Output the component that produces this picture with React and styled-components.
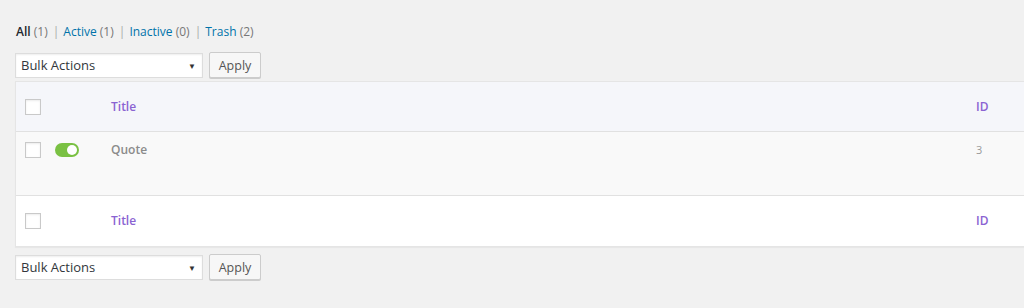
import React from "react"
import styled, { createGlobalStyle } from "styled-components"

const GlobalStyle = createGlobalStyle`
  html, body {
    margin: 0;
    background: #f1f1f1;
    overflow: hidden;
  }
  body {
    font-family: "Open Sans", "Noto Sans", sans-serif;
    color: #444;
  }
`

const Page = styled.div`
  width: 1024px;
  height: 308px;
  padding: 24px 0 0 15px;
  box-sizing: border-box;
  overflow: hidden;
`

const Filters = styled.ul`
  display: flex;
  list-style: none;
  margin: 0 0 0 1px;
  padding: 0;
  font-size: 12px;
  line-height: 16px;
  color: #666;
  white-space: nowrap;
`

const FilterItem = styled.li`
  a {
    color: ${(p) => (p.current ? "#23282d" : "#0073aa")};
    font-weight: ${(p) => (p.current ? 600 : 400)};
    text-decoration: none;
  }
  .count {
    color: #777;
  }
  .sep {
    color: #aaa;
    margin: 0 4px 0 5px;
  }
`

const ActionBar = styled.div`
  display: flex;
  align-items: center;
  gap: 6px;
  margin: ${(p) => p.margin};
`

const Select = styled.div`
  width: 188px;
  height: 25px;
  box-sizing: border-box;
  border: 1px solid #ddd;
  background: #fff;
  box-shadow: inset 0 1px 2px rgba(0, 0, 0, 0.07);
  display: flex;
  align-items: center;
  justify-content: space-between;
  padding: 0 6px 0 5px;
  font-size: 13px;
  color: #32373c;
`

const Caret = styled.span`
  font-size: 8px;
  color: #333;
  margin-right: 0;
`

const Button = styled.button`
  height: 26px;
  width: 52px;
  box-sizing: border-box;
  border: 1px solid #ccc;
  border-radius: 2px;
  background: #f7f7f7;
  box-shadow: 0 1px 0 #ccc;
  font-family: inherit;
  font-size: 12.5px;
  color: #555;
  padding: 0;
`

const Table = styled.div`
  width: 1012px;
  border: 1px solid #e5e5e5;
  box-shadow: 0 1px 1px rgba(0, 0, 0, 0.04);
  background: #fff;
`

const Row = styled.div`
  display: flex;
  align-items: ${(p) => (p.top ? "flex-start" : "center")};
  height: ${(p) => p.h}px;
  box-sizing: border-box;
  padding-top: ${(p) => (p.top ? 10 : 0)}px;
  background: ${(p) => p.bg};
  border-bottom: ${(p) => (p.line ? "1px solid #e1e1e1" : "none")};
`

const CheckCell = styled.div`
  width: 39px;
  padding-left: 9px;
  box-sizing: border-box;
  display: flex;
`

const Checkbox = styled.span`
  width: 16px;
  height: 16px;
  box-sizing: border-box;
  border: 1px solid #c9c9c9;
  background: #fff;
  box-shadow: inset 0 1px 2px rgba(0, 0, 0, 0.08);
`

const ToggleCell = styled.div`
  width: 56px;
  display: flex;
  padding-top: ${(p) => (p.top ? 1 : 0)}px;
`

const Toggle = styled.span`
  width: 24px;
  height: 14px;
  border-radius: 7px;
  background: #7ac143;
  display: flex;
  align-items: center;
  justify-content: flex-end;
  padding: 0 2px;
  box-sizing: border-box;

  &::after {
    content: "";
    width: 10px;
    height: 10px;
    border-radius: 50%;
    background: #fff;
  }
`

const TitleCell = styled.div`
  flex: 1;
  font-size: 12px;
  font-weight: 600;
  color: ${(p) => p.color};
  line-height: 16px;
`

const IdCell = styled.div`
  width: 52px;
  font-size: ${(p) => (p.head ? 12 : 11)}px;
  font-weight: ${(p) => (p.head ? 600 : 400)};
  color: ${(p) => (p.head ? "#8a63d2" : "#999")};
  line-height: 16px;
`

const filters = [
  { label: "All", count: 1, current: true },
  { label: "Active", count: 1 },
  { label: "Inactive", count: 0 },
  { label: "Trash", count: 2 },
]

const BulkActions = ({ margin }) => (
  <ActionBar margin={margin}>
    <Select>
      Bulk Actions
      <Caret>▼</Caret>
    </Select>
    <Button>Apply</Button>
  </ActionBar>
)

const App = () => {
  return (
    <Page>
      <GlobalStyle />
      <Filters>
        {filters.map((f, i) => (
          <FilterItem key={f.label} current={f.current}>
            <a href="#">{f.label}</a> <span className="count">({f.count})</span>
            {i < filters.length - 1 && <span className="sep">|</span>}
          </FilterItem>
        ))}
      </Filters>
      <BulkActions margin="12px 0 3px" />
      <Table>
        <Row h={50} bg="#f5f6fa" line>
          <CheckCell>
            <Checkbox />
          </CheckCell>
          <ToggleCell />
          <TitleCell color="#8a63d2">Title</TitleCell>
          <IdCell head>ID</IdCell>
        </Row>
        <Row h={64} bg="#f9f9f9" top line>
          <CheckCell>
            <Checkbox />
          </CheckCell>
          <ToggleCell top>
            <Toggle />
          </ToggleCell>
          <TitleCell color="#8b8b8b">Quote</TitleCell>
          <IdCell>3</IdCell>
        </Row>
        <Row h={50} bg="#fff">
          <CheckCell>
            <Checkbox />
          </CheckCell>
          <ToggleCell />
          <TitleCell color="#8a63d2">Title</TitleCell>
          <IdCell head>ID</IdCell>
        </Row>
      </Table>
      <BulkActions margin="7px 0 0" />
    </Page>
  )
}

export default App
